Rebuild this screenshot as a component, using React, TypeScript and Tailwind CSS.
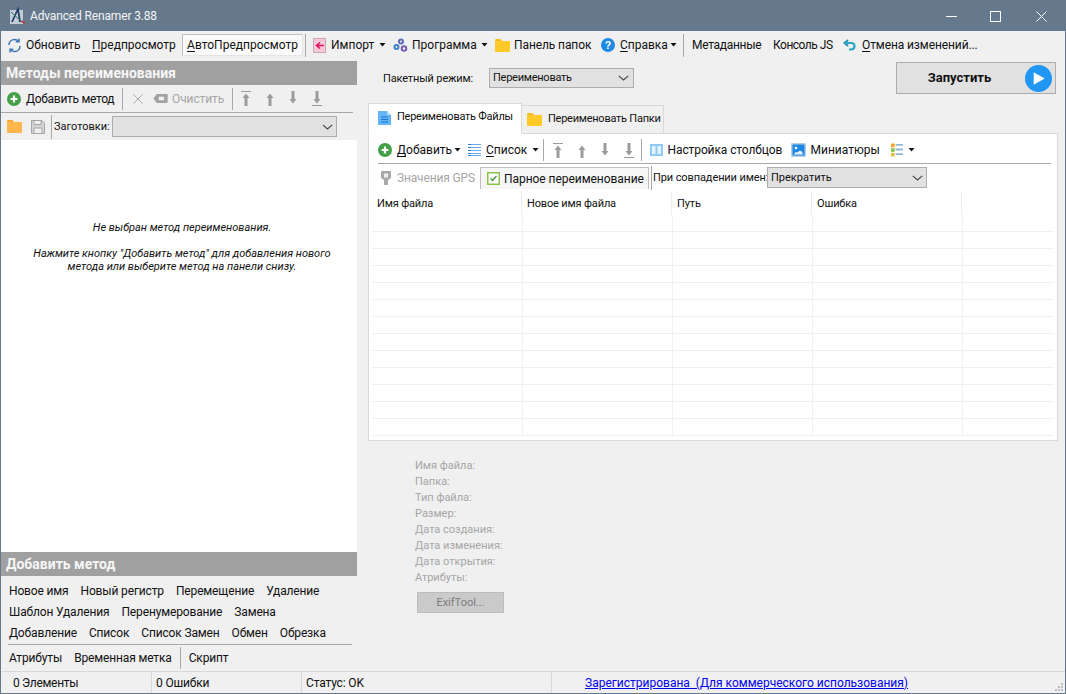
import React from "react";

const Caret = ({ className = "" }: { className?: string }) => (
  <svg width="7" height="4" viewBox="0 0 7 4" className={`shrink-0 ${className}`}><path d="M.5 0h6L3.500 3.500z" fill="#111" /></svg>
);
const Chevron = () => (
  <svg width="11" height="6" viewBox="0 0 11 6" fill="none" className="shrink-0"><path d="M.8.8 5.500 5 10.200.8" stroke="#444" strokeWidth="1.100" /></svg>
);
const Plus = () => (
  <svg width="14" height="14" viewBox="0 0 14 14" className="shrink-0"><circle cx="7" cy="7" r="7" fill="#43a047" /><path d="M7 3.600v6.800M3.600 7h6.800" stroke="#fff" strokeWidth="2.200" /></svg>
);
const Folder = ({ c = "#ffca28", t = "#f5b921" }: { c?: string; t?: string }) => (
  <svg width="15" height="13" viewBox="0 0 15 13" className="shrink-0"><path d="M0 1.500C0 .7.600 0 1.400 0h4l1.500 2H0z" fill={t} /><rect y="2" width="15" height="11" rx="1" fill={c} /></svg>
);
const Arrow = ({ dir, bar, c = "#9b9b9b" }: { dir: "u" | "d"; bar?: boolean; c?: string }) => (
  <svg width="10" height="15" viewBox="0 0 10 15" className="shrink-0">
    {dir === "u" ? (
      <g fill={c}><path d="M5 2.500 8.500 7H6.500v8h-3V7H1.500z" />{bar && <rect y="0" width="10" height="1" />}</g>
    ) : (
      <g fill={c}><path d="M5 12.500 8.500 8H6.500V0h-3v8H1.500z" />{bar && <rect y="14" width="10" height="1" />}</g>
    )}
  </svg>
);
const Arrows = () => (
  <>
    <Arrow dir="u" bar /><span className="w-[13.500px] shrink-0" />
    <Arrow dir="u" /><span className="w-[13.500px] shrink-0" />
    <Arrow dir="d" /><span className="w-[13.500px] shrink-0" />
    <Arrow dir="d" bar />
  </>
);
const Sep = ({ h = "h-[22px]", ml = "", mr = "" }: { h?: string; ml?: string; mr?: string }) => (
  <span className={`w-px bg-[#a8a8a8] shrink-0 ${h} ${ml} ${mr}`} />
);
const U = ({ children }: { children: React.ReactNode }) => <span className="underline underline-offset-2">{children}</span>;
const T = ({ w, className = "", children }: { w: string; className?: string; children: React.ReactNode }) => (
  <span className={`whitespace-nowrap shrink-0 ${w} ${className}`}>{children}</span>
);

function TitleBar() {
  return (
    <div className="h-[30px] bg-[#66788c] flex items-center text-white shrink-0">
      <svg width="18" height="18" viewBox="0 0 18 18" className="ml-[8px] mr-[3px] shrink-0">
        <rect x="1" y="3" width="13" height="14" fill="#c2cad6" />
        <path d="M3 15 9 2l2 13" fill="none" stroke="#243a68" strokeWidth="1.700" />
        <path d="M2 5l11 10" stroke="#2f7d55" strokeWidth="1" />
        <path d="M12 14l4 2" stroke="#c03040" strokeWidth="1.500" />
      </svg>
      <span className="text-[12px] tracking-[-0.15px] flex-1 text-[#f2f4f6]">Advanced Renamer 3.88</span>
      <svg width="11" height="1" className="mr-[33px] shrink-0"><rect width="11" height="1" fill="#fff" /></svg>
      <svg width="11" height="11" className="mr-[35px] shrink-0" fill="none"><rect x=".5" y=".5" width="10" height="10" stroke="#fff" /></svg>
      <svg width="11" height="11" className="mr-[18px] shrink-0" fill="none"><path d="M.5.5l10 10M10.500.5l-10 10" stroke="#fff" /></svg>
    </div>
  );
}

function MainToolbar() {
  return (
    <div className="h-[30px] pb-[2px] flex items-center text-[12px] text-[#111] shrink-0">
      <svg width="15" height="15" viewBox="0 0 15 15" fill="none" className="ml-[6px] mr-[4px] shrink-0" stroke="#3f78b5" strokeWidth="1.500">
        <path d="M2 7C2 3.500 4.500 1.500 7.500 1.500c1.500 0 3 .6 4 1.800" />
        <path d="M13 8c0 3.500-2.500 5.500-5.500 5.500-1.500 0-3-.6-4-1.800" />
        <path d="M12 .5v3.300H8.700M3 14.500v-3.300h3.300" />
      </svg>
      <T w="w-[66px]">Обновить</T>
      <T w="w-[90px]"><U>П</U>редпросмотр</T>
      <span className="w-[121px] h-[22px] mr-[2px] flex items-center justify-center bg-[#fafafa] border border-[#bfbfbf] border-b-[#e5e5e5] border-r-[#e5e5e5] shrink-0"><span className="whitespace-nowrap"><U>А</U>втоПредпросмотр</span></span>
      <Sep h="h-[23px]" mr="mr-[7px]" />
      <svg width="13" height="15" viewBox="0 0 13 15" className="mr-[5px] shrink-0"><rect x=".5" y=".5" width="12" height="14" fill="#f8c8d8" stroke="#c8a8b8" /><path d="M11 7.500H4M7 4.500l-3.500 3 3.500 3" stroke="#e0115f" strokeWidth="1.600" fill="none" /></svg>
      <T w="w-[48px]">Импорт</T><Caret className="mr-[7px]" />
      <svg width="15" height="15" viewBox="0 0 15 15" className="mr-[4px] shrink-0" fill="none" strokeWidth="2"><circle cx="8" cy="3.500" r="2" stroke="#5b6bb5" /><circle cx="3.500" cy="9" r="2" stroke="#3e80c8" /><circle cx="11" cy="10.500" r="2.300" stroke="#7a5bb0" /></svg>
      <T w="w-[69px]">Программа</T><Caret className="mr-[7px]" />
      <span className="mr-[4px] flex"><Folder /></span>
      <T w="w-[87px]" className="tracking-[-0.1px]">Панель папок</T>
      <svg width="14" height="14" viewBox="0 0 14 14" className="mr-[5px] shrink-0"><circle cx="7" cy="7" r="7" fill="#1e88e5" /><text x="7" y="10.800" fontSize="10.500" fontWeight="700" fill="#fff" textAnchor="middle" fontFamily="Liberation Sans">?</text></svg>
      <T w="w-[50px]"><U>С</U>правка</T><Caret className="mr-[6px]" />
      <Sep h="h-[23px]" mr="mr-[8px]" />
      <T w="w-[81px]" className="tracking-[-0.3px]">Метаданные</T>
      <T w="w-[70px]" className="tracking-[-0.5px]">Консоль JS</T>
      <svg width="14" height="13" viewBox="0 0 14 13" fill="none" className="mr-[5px] shrink-0"><path d="M5 1 1.500 4 5 7" stroke="#2a8fb5" strokeWidth="2" /><path d="M2 4h6.500c3.500 0 4.500 5.500 0 6.500H6" stroke="#2aa8c5" strokeWidth="2.200" /></svg>
      <T w="w-[120px]" className="tracking-[-0.1px]"><U>О</U>тмена изменений...</T>
    </div>
  );
}

function GrayHead({ children }: { children: React.ReactNode }) {
  return <div className="h-[24px] bg-[#a0a0a0] text-[#f6f6f6] font-bold text-[14px] leading-[25px] pl-[5px] shrink-0 whitespace-nowrap overflow-hidden">{children}</div>;
}

function Left() {
  const row = "flex items-center text-[12px] text-[#111] shrink-0";
  const methods = "flex gap-[12px] items-center whitespace-nowrap tracking-[-0.15px]";
  return (
    <div className="w-[356px] shrink-0 flex flex-col">
      <GrayHead>Методы переименования</GrayHead>
      <div className={`${row} h-[28px] pl-[6px] mr-[4px] border-b border-[#a8a8a8]`}>
        <Plus /><T w="w-[101px]" className="pl-[5px] tracking-[-0.3px]">Добавить метод</T>
        <Sep h="h-[22px]" mr="mr-[10px]" />
        <svg width="10" height="10" fill="none" className="mr-[10px] shrink-0"><path d="M.5.5l9 9M9.500.5l-9 9" stroke="#a8a8a8" /></svg>
        <svg width="15" height="9" viewBox="0 0 16 10" className="mr-[4px] shrink-0"><path d="M4 0h10.500a1.500 1.500 0 0 1 1.500 1.500v7a1.500 1.500 0 0 1-1.500 1.500H4L0 5z" fill="#a2a2a2" /><rect x="6" y="3" width="6" height="4" fill="#f0f0f0" /></svg>
        <T w="w-[60px]" className="text-[#a6a6a6] tracking-[-0.1px]">Очистить</T>
        <Sep h="h-[22px]" mr="mr-[8px]" />
        <Arrows />
      </div>
      <div className={`${row} h-[27px] pl-[6px]`}>
        <Folder c="#ffb74d" t="#f9a825" />
        <svg width="14" height="14" viewBox="0 0 14 14" className="ml-[9px] mr-[6px] shrink-0" fill="none"><path d="M.500.500h10.500l2.500 2.500v10.500H.500z" fill="#d4d4d4" stroke="#a6a6a6" /><rect x="3" y=".500" width="7" height="4" fill="#f0f0f0" stroke="#a6a6a6" /><rect x="3" y="8" width="8" height="5.500" fill="#f0f0f0" stroke="#a6a6a6" /></svg>
        <Sep h="h-[24px]" mr="mr-[2px]" />
        <T w="w-[58px]" className="text-[11px] pt-[1px]">Заготовки:</T>
        <div className="w-[225px] h-[21px] bg-[#e1e1e1] border border-[#adadad] flex items-center justify-end pr-[3px]"><Chevron /></div>
      </div>
      <div className="flex-1 bg-white flex flex-col items-center pl-[6px] pt-[81px] text-[11px] italic text-[#111] leading-[13px] text-center">
        <div>Не выбран метод переименования.</div>
        <div className="mt-[13px] w-[330px]">Нажмите кнопку "Добавить метод" для добавления нового<br />метода или выберите метод на панели снизу.</div>
      </div>
      <GrayHead>Добавить метод</GrayHead>
      <div className="h-[95px] shrink-0 flex flex-col text-[12px] text-[#111] px-[8px] pt-[4px]">
        <div className={`${methods} h-[21px]`}><span>Новое имя</span><span>Новый регистр</span><span>Перемещение</span><span>Удаление</span></div>
        <div className={`${methods} h-[21px]`}><span>Шаблон Удаления</span><span>Перенумерование</span><span>Замена</span></div>
        <div className={`${methods} h-[21px]`}><span>Добавление</span><span>Список</span><span>Список Замен</span><span>Обмен</span><span>Обрезка</span></div>
        <div className="h-px bg-[#a8a8a8] w-[344px] -ml-[1px] mt-[1px] shrink-0" />
        <div className={`${methods} h-[26px]`}><span>Атрибуты</span><span>Временная метка</span><span className="w-px h-[22px] bg-[#a8a8a8] -mx-[4px]" /><span>Скрипт</span></div>
      </div>
    </div>
  );
}

function Grid() {
  const cols = ["w-[150px]", "w-[150px]", "w-[140px]", "w-[150px]"];
  const rows = Array.from({ length: 13 });
  return (
    <div className="mx-[3px] flex-1 flex flex-col overflow-hidden">
      <div className="flex h-[24px] shrink-0 text-[11px] text-[#111] tracking-[-0.15px]">
        {["Имя файла", "Новое имя файла", "Путь", "Ошибка"].map((t, i) => (
          <div key={t} className={`${cols[i]} pl-[5px] leading-[25px] border-r border-[#ededed]`}>{t}</div>
        ))}
      </div>
      {rows.map((_, r) => (
        <div key={r} className="h-[17px] border-b border-[#f0f0f0] flex shrink-0">
          <div className="w-[151px] border-r border-[#f0f0f0]" />
          <div className="w-[150px] border-r border-[#f0f0f0]" />
          <div className="w-[140px] border-r border-[#f0f0f0]" />
          <div className="w-[150px] border-r border-[#f0f0f0]" />
        </div>
      ))}
    </div>
  );
}

function Right() {
  return (
    <div className="flex-1 flex flex-col text-[12px] text-[#111] pl-[11px] pr-[7px] min-w-0">
      <div className="h-[42px] flex items-start shrink-0 relative text-[11px]">
        <span className="ml-[15px] mt-[10px] w-[106px] whitespace-nowrap tracking-[-0.15px]">Пакетный режим:</span>
        <div className="mt-[7px] w-[145px] h-[20px] bg-[#e1e1e1] border border-[#adadad] flex items-center justify-between pl-[3px] pr-[4px]"><span className="tracking-[-0.25px] pt-[1px]">Переименовать</span><Chevron /></div>
        <div className="ml-auto mr-[2px] mt-[1px] w-[160px] h-[32px] bg-[#e1e1e1] border border-[#adadad] flex items-center relative">
          <span className="font-bold text-[13px] w-[125px] text-center">Запустить</span>
          <svg width="27" height="27" viewBox="0 0 28 28" className="absolute right-[3px] top-[1.500px]"><circle cx="14" cy="14" r="14" fill="#2196f3" /><path d="M9 7.500v13L20.500 14z" fill="#fff" /></svg>
        </div>
      </div>
      <div className="h-[31px] flex items-end shrink-0 -mb-px relative text-[11px] tracking-[-0.25px]">
        <div className="w-[154px] h-[31px] bg-white border border-[#d9d9d9] border-b-white flex items-center pl-[9px] pb-[2px] z-10">
          <svg width="13" height="15" viewBox="0 0 13 15" className="mr-[6px] shrink-0"><path d="M0 1h9l4 4v10H0z" fill="#64b5f6" /><path d="M9 1l4 4H9z" fill="#bbdefb" /><path d="M3 7h7M3 9.500h7M3 12h7" stroke="#1976d2" /></svg>
          <span className="whitespace-nowrap">Переименовать Файлы</span>
        </div>
        <div className="w-[143px] h-[29px] -ml-px bg-[#f0f0f0] border border-[#d9d9d9] flex items-center pl-[5px]">
          <span className="mr-[6px] flex"><Folder /></span>
          <span className="whitespace-nowrap">Переименовать Папки</span>
        </div>
      </div>
      <div className="h-[308px] shrink-0 bg-white border border-[#d9d9d9] flex flex-col">
        <div className="h-[30px] pt-[3px] flex items-center ml-[9px] mr-[6px] border-b border-[#a8a8a8] shrink-0">
          <Plus />
          <T w="w-[62px]" className="pl-[5px]"><U>Д</U>обавить</T><Caret className="mr-[7px]" />
          <svg width="13" height="12" viewBox="0 0 13 12" className="mr-[5px] shrink-0" stroke="#2f80d5"><path d="M0 .500h3M0 3.500h3M0 6.500h3M0 9.500h3M0 11.500h3" /><path d="M3 .500h10M3 3.500h10M3 6.500h10M3 9.500h10M3 11.500h10" stroke="#6aaee8" /></svg>
          <T w="w-[46px]"><U>С</U>писок</T><Caret />
          <Sep h="h-[22px]" ml="ml-[4px]" mr="mr-[9px]" />
          <Arrows />
          <Sep h="h-[22px]" ml="ml-[7px]" mr="mr-[8px]" />
          <svg width="13" height="12" viewBox="0 0 13 12" className="mr-[5px] shrink-0"><rect width="13" height="12" fill="#90caf9" /><rect x="2" y="2" width="3.500" height="8" fill="#e3f2fd" /><rect x="7.500" y="2" width="3.500" height="8" fill="#e3f2fd" /></svg>
          <T w="w-[123px]" className="tracking-[-0.1px]">Настройка столбцов</T>
          <svg width="15" height="14" viewBox="0 0 15 14" className="mr-[5px] shrink-0"><rect width="15" height="14" rx="1" fill="#b7cfe3" /><rect x="1.500" y="1.500" width="12" height="11" fill="#1e88e5" /><circle cx="5" cy="5" r="1.300" fill="#fff" /><path d="M3 11.500c1-3 3-3 4-2 1-2.500 4-2.500 5 2z" fill="#e3f2fd" /></svg>
          <T w="w-[80px]">Миниатюры</T>
          <svg width="12" height="14" viewBox="0 0 13 14" className="mr-[5px] shrink-0"><rect x="0" y="0" width="4" height="4" fill="#f5a623" /><rect x="0" y="5" width="4" height="4" fill="#8bc34a" /><rect x="0" y="10" width="4" height="4" fill="#e0c040" /><path d="M5 1.500h8M5 6.500h8M5 11.500h8" stroke="#90b8d8" strokeWidth="2" /></svg>
          <Caret />
        </div>
        <div className="h-[27px] flex items-center shrink-0 ml-[12px]">
          <svg width="10" height="14" viewBox="0 0 10 14" className="mr-[6px] shrink-0"><path d="M1 0h8a1 1 0 0 1 1 1v6l-3 2v5H3V9L0 7V1a1 1 0 0 1 1-1z" fill="#a8a8a8" /><rect x="3" y="2.500" width="4" height="4" fill="#eee" /></svg>
          <T w="w-[83px]" className="text-[#a6a6a6] tracking-[-0.15px]">Значения GPS</T>
          <span className="h-[22px] w-[169px] shrink-0 flex items-center pl-[6px] bg-[#f6f6f6] border border-[#bfbfbf] border-b-0 mt-[1px]">
            <svg width="13" height="13" viewBox="0 0 13 13" className="mr-[4px] shrink-0"><rect x=".750" y=".750" width="11.500" height="11.500" fill="#fff" stroke="#8bc34a" strokeWidth="1.500" /><path d="M3.500 6.500 5.500 8.500 9.500 4" fill="none" stroke="#4c8c40" strokeWidth="1.300" /></svg>
            <span className="whitespace-nowrap tracking-[-0.05px]">Парное переименование</span>
          </span>
          <Sep h="h-[24px]" ml="ml-[2px]" mr="mr-[1px]" />
          <T w="w-[114px]" className="text-[11px] tracking-[-0.1px] pt-[1px]">При совпадении имен:</T>
          <div className="w-[160px] h-[21px] text-[11px] bg-[#e1e1e1] border border-[#adadad] flex items-center justify-between pl-[3px] pr-[3px]"><span className="pt-[1px]">Прекратить</span><Chevron /></div>
        </div>
        <Grid />
      </div>
      <div className="flex-1 flex flex-col pl-[47px] pt-[17px] text-[11px] text-[#a6a6a6] leading-[16px]">
        {["Имя файла:", "Папка:", "Тип файла:", "Размер:", "Дата создания:", "Дата изменения:", "Дата открытия:", "Атрибуты:"].map((t) => <div key={t}>{t}</div>)}
        <div className="mt-[6px] ml-[2px] w-[87px] h-[21px] bg-[#cacaca] border border-[#bcbcbc] text-[#7d7d7d] text-center leading-[19px]">ExifTool...</div>
      </div>
    </div>
  );
}

function Status() {
  return (
    <div className="h-[22px] shrink-0 flex items-center border-t border-[#d8d8d8] text-[12px] text-[#111] relative">
      <T w="w-[151px] pl-[12px] border-r border-[#d8d8d8] h-[21px] leading-[22px] tracking-[-0.3px]">0 Элементы</T>
      <T w="w-[150px] pl-[4px] border-r border-[#d8d8d8] h-[21px] leading-[22px] tracking-[-0.15px]">0 Ошибки</T>
      <T w="w-[250px] pl-[4px] border-r border-[#d8d8d8] h-[21px] leading-[22px] tracking-[-0.15px]">Статус: OK</T>
      <a className="ml-[33px] underline text-[#0000ee] whitespace-nowrap" href="#">Зарегистрирована&nbsp;&nbsp;(Для коммерческого использования)</a>
      <svg width="9" height="9" viewBox="0 0 9 9" className="absolute right-[1px] bottom-[1px]" fill="#bdbdbd"><rect x="6" y="0" width="2" height="2" /><rect x="3" y="3" width="2" height="2" /><rect x="6" y="3" width="2" height="2" /><rect x="0" y="6" width="2" height="2" /><rect x="3" y="6" width="2" height="2" /><rect x="6" y="6" width="2" height="2" /></svg>
    </div>
  );
}

export default function App() {
  return (
    <div className="w-[1066px] h-[694px] overflow-hidden bg-[#f0f0f0] border border-[#66788c] flex flex-col font-['Roboto',sans-serif]">
      <TitleBar />
      <MainToolbar />
      <div className="flex-1 flex min-h-0">
        <Left />
        <Right />
      </div>
      <Status />
    </div>
  );
}
